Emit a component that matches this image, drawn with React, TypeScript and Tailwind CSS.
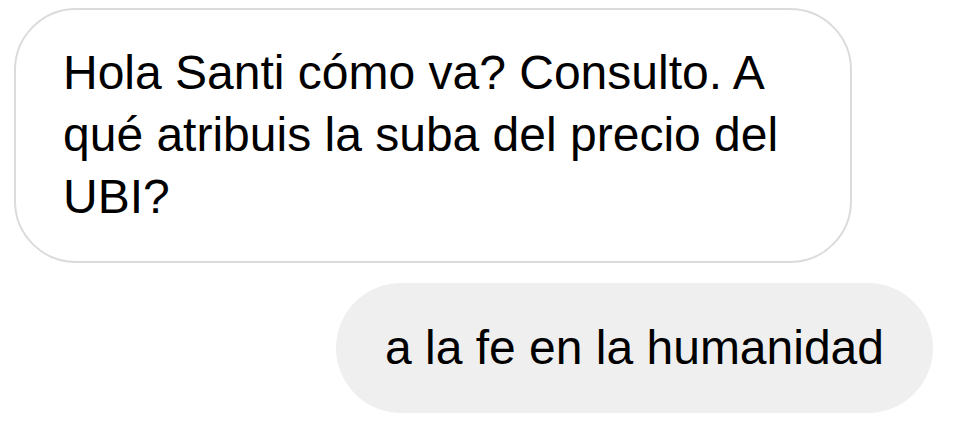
export default function App() {
  return (
    <div className="w-[954px] h-[430px] bg-white flex flex-col pt-2 pl-[14px] pr-[21px] font-['Liberation_Sans',Arial,sans-serif] text-black">
      {/* incoming message */}
      <div className="w-[838px] h-[255px] rounded-[62px] border-2 border-[#dbdbdb] pl-[47px] pt-[32px] text-[48px] leading-[62px]">
        Hola Santi cómo va? Consulto. A<br />
        qué atribuis la suba del precio del<br />
        UBI?
      </div>

      {/* outgoing message */}
      <div className="self-end mt-5 h-[130px] rounded-full bg-[#efefef] px-[49px] flex items-center text-[48px] leading-[62px]">
        a la fe en la humanidad
      </div>
    </div>
  );
}
